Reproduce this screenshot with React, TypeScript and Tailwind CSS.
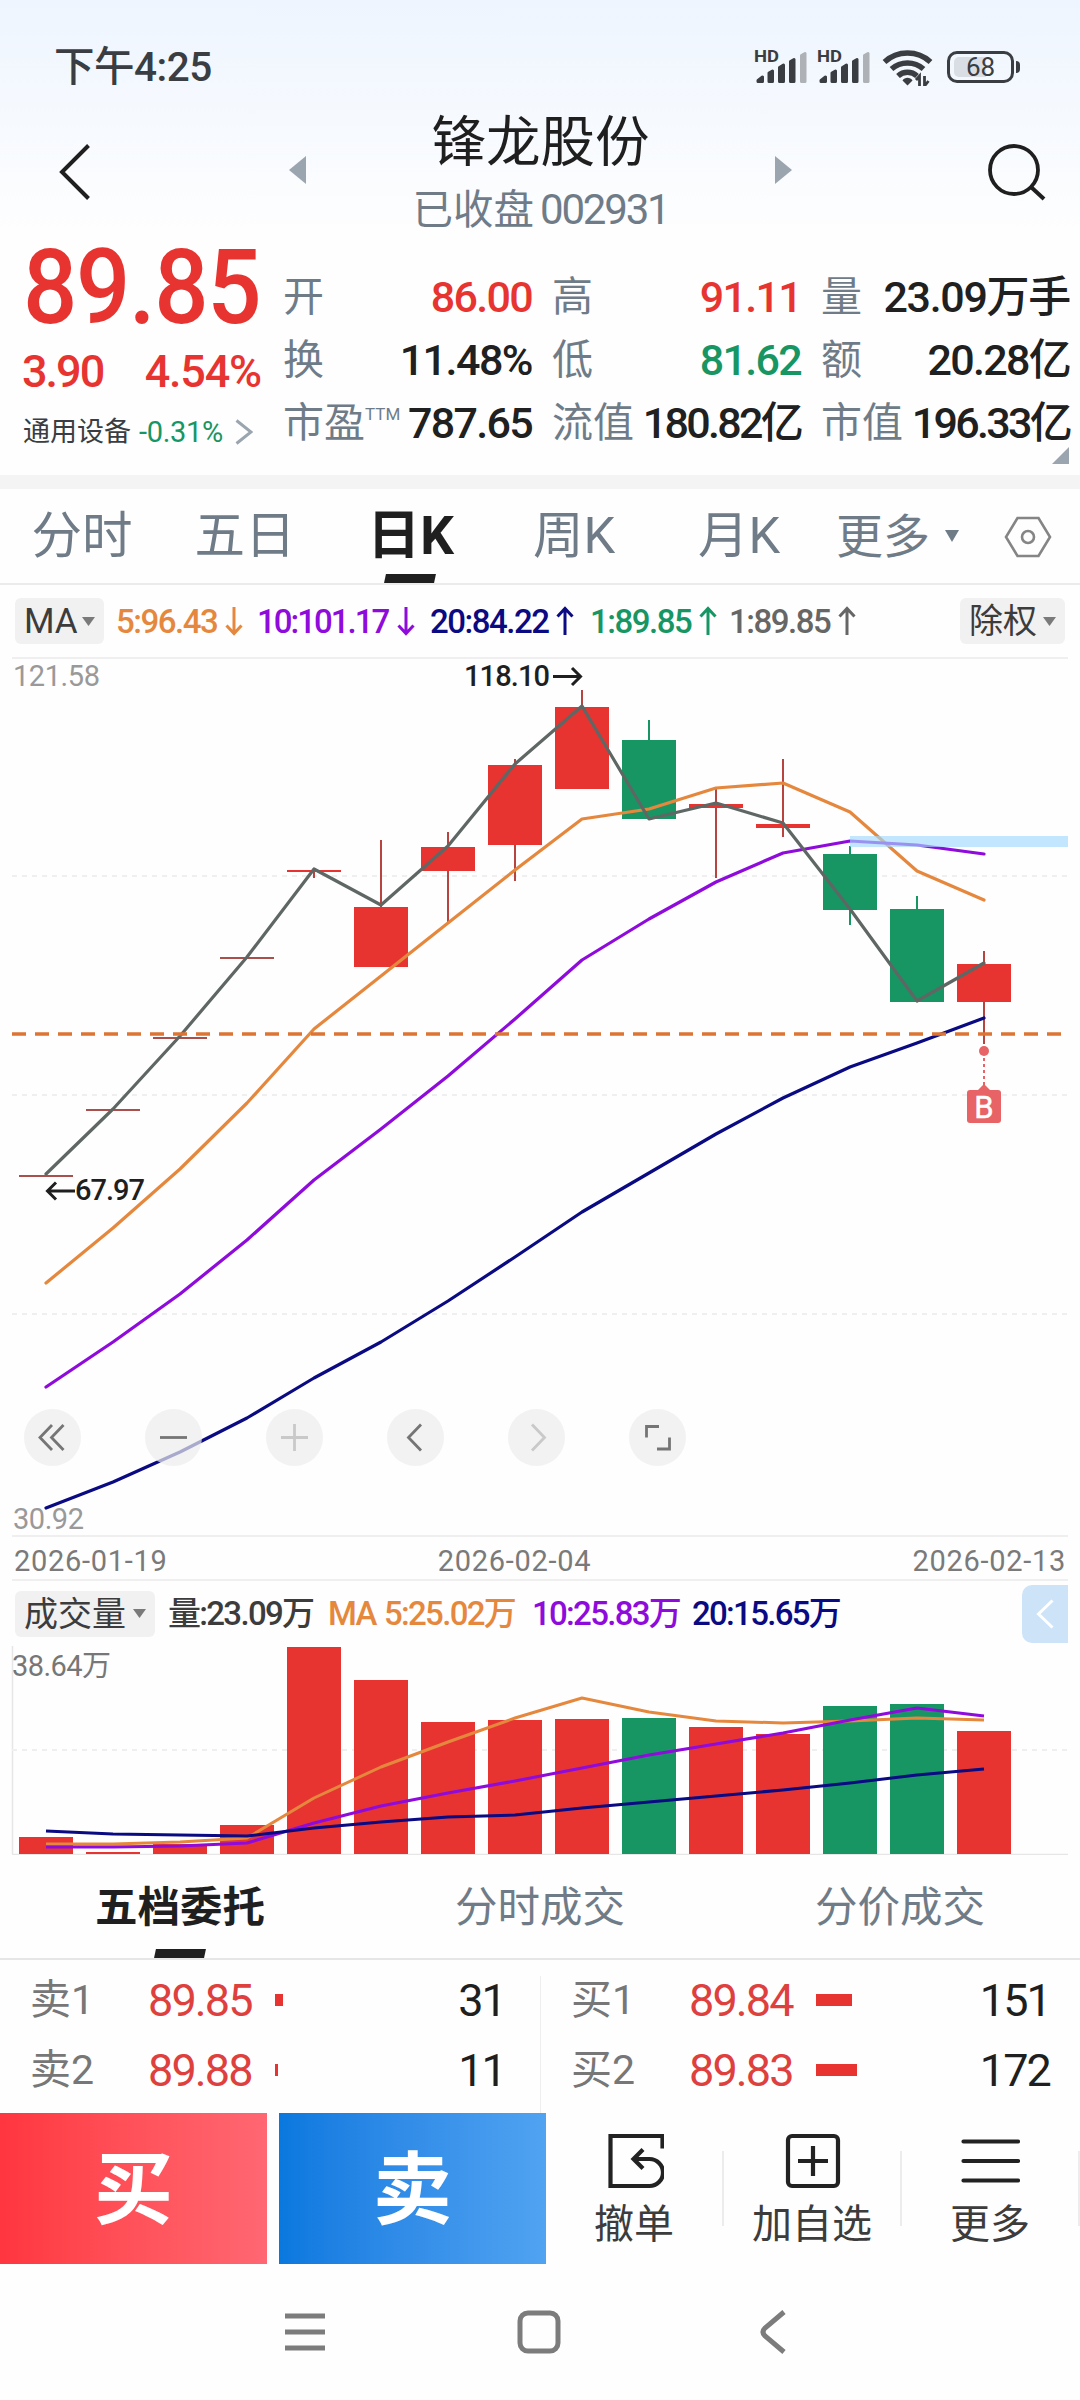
import type { ReactNode } from "react"
import clsx from "clsx"

const RED = "#e73431"
const GREEN = "#179664"
const ORANGE = "#e5883e"
const PURPLE = "#8e0bdc"
const NAVY = "#0a0a82"
const GREY_LINE = "#5f6764"

// x centre of the n-th candle / volume bar
const cx = (i: number) => 46 + i * 67

interface Candle {
  top: number
  bottom: number
  high?: number
  low?: number
  down?: boolean
}

const candles: Candle[] = [
  { top: 1175, bottom: 1177 },
  { top: 1109, bottom: 1111 },
  { top: 1037, bottom: 1039 },
  { top: 957, bottom: 959 },
  { top: 870, bottom: 872, high: 868, low: 878 },
  { top: 907, bottom: 967, high: 840 },
  { top: 847, bottom: 871, high: 832, low: 922 },
  { top: 765, bottom: 845, high: 759, low: 881 },
  { top: 707, bottom: 789, high: 690 },
  { top: 740, bottom: 819, high: 720, down: true },
  { top: 804, bottom: 808, high: 788, low: 878 },
  { top: 824, bottom: 828, high: 759, low: 837 },
  { top: 854, bottom: 910, high: 846, low: 925, down: true },
  { top: 909, bottom: 1002, high: 896, down: true },
  { top: 964, bottom: 1002, high: 951, low: 1044 },
]

const closeLine = [1174, 1109, 1036, 957, 869, 905, 846, 764, 706, 819, 803, 823, 909, 1001, 963]
const ma5 = [1283, 1228, 1169, 1103, 1029, 976, 923, 870, 819, 809, 788, 783, 812, 871, 900]
const ma10 = [1387, 1342, 1294, 1240, 1180, 1129, 1076, 1019, 960, 919, 882, 853, 841, 845, 854]
const ma20 = [1508, 1482, 1452, 1418, 1378, 1342, 1301, 1257, 1212, 1173, 1134, 1098, 1067, 1043, 1018]

const volumes = [1837, 1852, 1844, 1825, 1647, 1680, 1722, 1720, 1719, 1718, 1727, 1734, 1706, 1704, 1731]
const volumeDown = [9, 12, 13]
const vol5 = [1844, 1844, 1842, 1838, 1798, 1767, 1742, 1718, 1698, 1712, 1721, 1723, 1721, 1718, 1720]
const vol10 = [1847, 1847, 1846, 1843, 1823, 1806, 1793, 1781, 1768, 1755, 1744, 1733, 1720, 1708, 1716]
const vol20 = [1831, 1834, 1835, 1836, 1828, 1822, 1817, 1815, 1808, 1802, 1796, 1790, 1783, 1775, 1769]

const toPoints = (ys: number[]) => ys.map((y, i) => `${cx(i)},${y}`).join(" ")

function Caret({ className = "h-[9px] w-[13px]" }: { className?: string }) {
  return (
    <svg viewBox="0 0 12 10" preserveAspectRatio="none" className={clsx("shrink-0", className)}>
      <path d="M0 0H12L6 10Z" fill="currentColor" />
    </svg>
  )
}

function TrendArrow({ up }: { up?: boolean }) {
  return (
    <svg viewBox="0 0 18 30" className={clsx("h-[30px] w-[18px] shrink-0", !up && "rotate-180")}>
      <path d="M9 29V3M1.5 10.5L9 2.5L16.5 10.5" fill="none" stroke="currentColor" strokeWidth="3" />
    </svg>
  )
}

function Signal() {
  return (
    <svg viewBox="0 0 54 38" className="h-[38px] w-[54px]">
      <text x="0" y="14" fontSize="16.500" fontWeight="700" fill="#3a3d41" textLength="25" lengthAdjust="spacingAndGlyphs">
        HD
      </text>
      <g strokeWidth="3" strokeLinejoin="round" fill="#3a3d41" stroke="#3a3d41">
        <path d="M4 32.500L8.500 29V33.500H4ZM15 25L18.500 23V33.500H15ZM25.500 19.500L29.500 17V33.500H25.500ZM36.500 13.500L40 11.500V33.500H36.500Z" />
        <path d="M47.500 7.500L51 5.500V33.500H47.500Z" fill="#aeb1b5" stroke="#aeb1b5" />
      </g>
    </svg>
  )
}

function StatusBar() {
  return (
    <div className="flex h-[100px] items-center pt-[34px] pr-[60px] pl-[54px] text-[#3a3d41]">
      <span className="text-[40.500px] leading-none font-medium tracking-[-0.5px]">下午4:25</span>
      <div className="ml-auto flex items-center">
        <div className="mr-[9px]">
          <Signal />
        </div>
        <div className="mr-[11px]">
          <Signal />
        </div>
        <svg viewBox="0 0 51 38" className="mr-[14px] h-[38px] w-[51px]">
          <g fill="none" stroke="#3a3d41" strokeWidth="5.5">
            <path d="M2.500 14A34 34 0 0 1 48.500 14" />
            <path d="M9.500 21A24 24 0 0 1 41.500 21" />
            <path d="M16 28A14 14 0 0 1 35 28" />
          </g>
          <path d="M25.500 37.500L20.500 32.500A6 6 0 0 1 30.500 32.500Z" fill="#3a3d41" />
          <path d="M37.500 38V28L34 32M42.500 28V38L46.500 33" fill="none" stroke="#3a3d41" strokeWidth="2.800" />
        </svg>
        <div className="flex items-center gap-[2px]">
          <div className="relative flex h-8 w-[67px] items-center justify-center rounded-[10px] border-[3.500px] border-[#3a3d41]">
            <div className="absolute top-[3px] bottom-[3px] left-1 w-8 rounded-l-[5px] bg-[#d9dee5]" />
            <span className="relative text-[26px] leading-none">68</span>
          </div>
          <div className="h-3 w-1 rounded-r bg-[#3a3d41]" />
        </div>
      </div>
    </div>
  )
}

function TitleBar() {
  return (
    <div className="flex h-[136px] items-center justify-between pr-[33px] pl-[59px]">
      <svg viewBox="0 0 32 56" className="mt-[8px] h-14 w-8">
        <path d="M29.500 1.500L3 28L29.500 54.500" fill="none" stroke="#1f1f1f" strokeWidth="4" />
      </svg>
      <svg viewBox="0 0 17 28" className="mt-[3px] mr-[3px] ml-[96px] h-7 w-[17px] text-[#9aa5af]">
        <path d="M17 0V28L0 14Z" fill="currentColor" />
      </svg>
      <div className="mt-[10px] flex w-[260px] flex-col items-center">
        <h1 className="text-[54.500px] leading-none text-[#1f1f1f]">锋龙股份</h1>
        <p className="mt-[20px] flex items-center gap-[6px] leading-none text-[#6f7c88]">
          <span className="text-[40.500px] leading-none">已收盘</span>
          <span className="text-[42px] leading-none tracking-[-2.200px]">002931</span>
        </p>
      </div>
      <svg viewBox="0 0 17 28" className="mt-[3px] mr-[93px] ml-[3px] h-7 w-[17px] text-[#9aa5af]">
        <path d="M0 0V28L17 14Z" fill="currentColor" />
      </svg>
      <svg viewBox="0 0 60 60" className="mt-[8px] h-[60px] w-[60px]">
        <circle cx="27" cy="28" r="24" fill="none" stroke="#1f1f1f" strokeWidth="3.800" />
        <path d="M44 45L57 57" stroke="#1f1f1f" strokeWidth="4" />
      </svg>
    </div>
  )
}

interface StatProps {
  label: ReactNode
  value: string
  tone?: string
  fit?: string
}

function Stat({ label, value, tone = "text-[#202020]", fit = "tracking-[-1.700px]" }: StatProps) {
  return (
    <div className="flex h-[63px] items-center justify-between leading-none whitespace-nowrap">
      <span className="flex text-[41px] text-[#6f7c88]">{label}</span>
      <span className={clsx("-mr-px text-[43px] font-medium", tone, fit)}>{value}</span>
    </div>
  )
}

function Quote() {
  return (
    <section className="flex h-[239px] pl-[23px] text-[#e73431]">
      <div className="w-[260px] shrink-0">
        <div className="mt-[14px] flex h-[76px] origin-left scale-x-[0.920] items-center text-[104px] leading-none font-medium tracking-[-1.500px]">
          89.85
        </div>
        <div className="mt-[25px] flex h-[40px] w-[238px] items-center justify-between text-[45px] leading-none font-medium">
          <span className="-ml-px tracking-[-2px]">3.90</span>
          <span className="tracking-[-1.200px]">4.54%</span>
        </div>
        <div className="mt-[25px] flex h-8 items-center leading-none">
          <span className="text-[27px] text-[#3a3d41]">通用设备</span>
          <span className="ml-2 text-[29px] tracking-[-0.300px] text-[#179664]">-0.31%</span>
          <svg viewBox="0 0 18 26" className="ml-[12px] h-[26px] w-[18px]">
            <path d="M1.500 1.500L16 13L1.500 24.500" fill="none" stroke="#9aa5af" strokeWidth="3" />
          </svg>
        </div>
      </div>
      <div className="grid w-[786px] shrink-0 grid-cols-3 gap-x-[21px] pt-[30px]">
        <div>
          <Stat label="开" value="86.00" tone="text-[#e73431]" />
          <Stat label="换" value="11.48%" fit="tracking-[-1.500px]" />
          <Stat
            label={
              <>
                市盈<sup className="top-0 mt-[3px] text-[17px] leading-none">TTM</sup>
              </>
            }
            value="787.65"
          />
        </div>
        <div>
          <Stat label="高" value="91.11" tone="text-[#e73431]" />
          <Stat label="低" value="81.62" tone="text-[#179664]" />
          <Stat label="流值" value="180.82亿" fit="tracking-[-2.700px]" />
        </div>
        <div>
          <Stat label="量" value="23.09万手" fit="tracking-[-1.300px]" />
          <Stat label="额" value="20.28亿" />
          <Stat label="市值" value="196.33亿" fit="tracking-[-2.700px]" />
          <svg viewBox="0 0 17 17" className="-mt-[8px] ml-auto h-[17px] w-[17px]">
            <path d="M17 0V17H0Z" fill="#9aa5af" />
          </svg>
        </div>
      </div>
    </section>
  )
}

function PeriodTabs() {
  return (
    <nav className="flex h-24 items-stretch border-b-2 border-[#ebebeb] text-[50.500px] leading-none text-[#6f7c88]">
      <button className="w-[164px]">分时</button>
      <button className="w-[162px]">五日</button>
      <button className="relative w-[172px] pr-[3px] text-[53px] font-bold text-[#1f1f1f]">
        日K
        <span className="absolute bottom-0 left-[59px] h-[9px] w-[50px] -skew-x-12 bg-[#1f1f1f]" />
      </button>
      <button className="w-[152px]">周K</button>
      <button className="w-[178px]">月K</button>
      <button className="flex w-[131px] items-center justify-end gap-[15px] text-[47px]">
        更多
        <Caret className="h-3 w-[14px]" />
      </button>
      <svg viewBox="0 0 48 42" className="mt-[27px] ml-[45px] h-[42px] w-12">
        <path d="M13.500 2H34.500L46 21L34.500 40H13.500L2 21Z" fill="none" stroke="#858585" strokeWidth="2.600" />
        <circle cx="24" cy="21" r="6" fill="none" stroke="#858585" strokeWidth="2.600" />
      </svg>
    </nav>
  )
}

function Chip({ className, children }: { className: string; children: ReactNode }) {
  return (
    <button
      className={clsx(
        "flex h-[46px] shrink-0 items-center justify-between rounded-[6px] bg-[#f1f1f1] px-[9px] text-[34px] leading-none font-normal tracking-normal text-[#3c3c3c]",
        className
      )}
    >
      {children}
    </button>
  )
}

function MaLegend() {
  return (
    <div className="flex h-[72px] items-center px-[15px] text-[33px] leading-none font-medium tracking-[-1.500px]">
      <Chip className="mr-3 w-[89px]">
        <span className="text-[35px]">MA</span>
        <Caret className="h-[9px] w-[13px] text-[#7a7a7a]" />
      </Chip>
      <span className="flex w-[141px] items-center gap-2 text-[#e5883e]">
        5:96.43
        <TrendArrow />
      </span>
      <span className="flex w-[173px] items-center gap-[9px] tracking-[-2px] text-[#8e0bdc]">
        10:101.17
        <TrendArrow />
      </span>
      <span className="flex w-[160px] items-center gap-2 text-[#0a0a82]">
        20:84.22
        <TrendArrow up />
      </span>
      <span className="flex w-[139px] items-center gap-2 text-[#179664]">
        1:89.85
        <TrendArrow up />
      </span>
      <span className="flex items-center gap-2 text-[#666]">
        1:89.85
        <TrendArrow up />
      </span>
      <Chip className="ml-auto w-[105px]">
        <span>除权</span>
        <Caret className="h-[9px] w-[13px] text-[#7a7a7a]" />
      </Chip>
    </div>
  )
}

const controls = [
  { name: "first", d: "M28 16L16 28.500L28 41M39.500 16L27.500 28.500L39.500 41" },
  { name: "zoom out", d: "M15 28.500H42" },
  { name: "zoom in", d: "M15 28.500H42M28.500 15V42", dim: true },
  { name: "previous", d: "M34 15.500L21.500 28.500L34 41.500" },
  { name: "next", d: "M24 15.500L36.500 28.500L24 41.500", dim: true },
  { name: "full screen", d: "M17.500 28.500V17.500H30M40.500 28.500V40H28" },
]

function PriceChart() {
  return (
    <div className="relative h-[880px]">
      <svg viewBox="0 657 1080 880" className="h-[880px] w-[1080px]">
        <path d="M12 658H1068M12 1536H1068" stroke="#efefef" strokeWidth="2" />
        <path d="M12 876H1068M12 1095H1068M12 1314H1068" stroke="#efefef" strokeWidth="2" strokeDasharray="5 5" />
        {candles.map((c, i) => (
          <g key={i} fill={c.down ? GREEN : RED}>
            <rect
              x={cx(i) - 1}
              y={c.high ?? c.top}
              width="2"
              height={(c.low ?? c.bottom) - (c.high ?? c.top)}
              fill={c.down ? GREEN : "#b8443f"}
            />
            <rect x={cx(i) - 27} y={c.top} width="54" height={c.bottom - c.top} fill={i < 4 ? "#a9504c" : undefined} />
          </g>
        ))}
        <g fill="none" strokeWidth="3.200" strokeLinejoin="round" strokeLinecap="round">
          <polyline points={toPoints(ma5)} stroke={ORANGE} />
          <polyline points={toPoints(ma10)} stroke={PURPLE} />
          <polyline points={toPoints(ma20)} stroke={NAVY} />
          <polyline points={toPoints(closeLine)} stroke={GREY_LINE} />
        </g>
        <path d="M12 1034H1063" stroke="#dd7433" strokeWidth="3.400" strokeDasharray="14 9" />
        <rect x="850" y="836" width="218" height="11" fill="rgb(161 217 252 / 0.66)" />

        <circle cx="984" cy="1051" r="5" fill="#e76365" />
        <path d="M984 1058V1085" stroke="#e76365" strokeWidth="2" strokeDasharray="3 3" />
        <path d="M984 1084L991 1091H977Z" fill="#e76365" />
        <rect x="967" y="1090" width="34" height="33" rx="3" fill="#e76365" />
        <text x="984" y="1117.500" textAnchor="middle" fontSize="31" fill="#fff" stroke="#fff" strokeWidth="0.500">
          B
        </text>

        <g fontSize="29" fill="#999">
          <text x="13" y="686" textLength="87">121.58</text>
          <text x="13" y="1529" textLength="71">30.92</text>
        </g>
        <g fontSize="29" fontWeight="500" fill="#1f1f1f">
          <text x="464" y="685.500" textLength="86">118.10</text>
          <text x="75" y="1199.500" textLength="70">67.97</text>
        </g>
        <g fill="none" stroke="#1f1f1f" strokeWidth="3">
          <path d="M553 676.500H580M572 668L580.500 676.500L572 685" />
          <path d="M75 1191H48M56 1182.500L47.500 1191L56 1199.500" />
        </g>
      </svg>
      <div className="absolute top-[752px] left-6 flex gap-16">
        {controls.map((c) => (
          <button key={c.name} className="h-[57px] w-[57px] rounded-full bg-[#ececec]/70">
            <svg viewBox="0 0 57 57" className="h-[57px] w-[57px]">
              <path d={c.d} fill="none" stroke={c.dim ? "#c9c9c9" : "#757575"} strokeWidth="2.800" />
            </svg>
          </button>
        ))}
      </div>
    </div>
  )
}

function VolumeLegend() {
  return (
    <div className="flex h-[65px] items-center pr-3 pl-[15px] text-[33px] leading-none font-medium tracking-[-1.700px] whitespace-nowrap">
      <Chip className="mr-[13px] w-[140px]">
        <span>成交量</span>
        <Caret className="h-[9px] w-[13px] text-[#7a7a7a]" />
      </Chip>
      <span className="w-[160px] text-[#3c3c3c]">量:23.09万</span>
      <span className="w-[56px] text-[#e5883e]">MA</span>
      <span className="w-[148px] text-[#e5883e]">5:25.02万</span>
      <span className="w-[160px] text-[#8e0bdc]">10:25.83万</span>
      <span className="text-[#0a0a82]">20:15.65万</span>
      <button className="ml-auto flex h-[58px] w-[46px] items-center justify-center rounded-l-[10px] bg-[#cde3f8]">
        <svg viewBox="0 0 18 30" className="h-[30px] w-[18px]">
          <path d="M16.500 1.500L2.500 15L16.500 28.500" fill="none" stroke="#fff" strokeWidth="3" />
        </svg>
      </button>
    </div>
  )
}

function VolumeChart() {
  return (
    <svg viewBox="0 1646 1080 209" className="block h-[209px] w-[1080px]">
      <path d="M12.500 1646V1854M12 1854.500H1068" stroke="#e6e6e6" strokeWidth="1.500" />
      <path d="M12 1750H1068" stroke="#efefef" strokeWidth="2" strokeDasharray="5 5" />
      <text x="12" y="1676" fontSize="29" fill="#777" textLength="99">38.64万</text>
      {volumes.map((y, i) => (
        <rect key={i} x={cx(i) - 27} y={y} width="54" height={1854 - y} fill={volumeDown.includes(i) ? GREEN : RED} />
      ))}
      <g fill="none" strokeWidth="3" strokeLinejoin="round">
        <polyline points={toPoints(vol5)} stroke={ORANGE} />
        <polyline points={toPoints(vol10)} stroke={PURPLE} />
        <polyline points={toPoints(vol20)} stroke={NAVY} />
      </g>
    </svg>
  )
}

function OrderRow({ label, price, bar, amount }: { label: string; price: string; bar: string; amount: string }) {
  return (
    <div className="flex h-[70px] items-center leading-none">
      <span className="w-[118px] text-[41px] text-[#777]">{label}</span>
      <span className="w-[127px] text-[45px] tracking-[-1.900px] text-[#de403e]">{price}</span>
      <span className={clsx("h-3 bg-[#e73431]", bar)} />
      <span className="ml-auto text-[45px] tracking-[-1.900px] text-[#1f1f1f]">{amount}</span>
    </div>
  )
}

function OrderBook() {
  return (
    <section className="h-[258px]">
      <nav className="grid h-[105px] grid-cols-3 border-b-2 border-[#e6e6e6] text-[42.500px] leading-none text-[#6f7c88]">
        <button className="relative pt-[3px] font-bold text-[#1f1f1f]">
          五档委托
          <span className="absolute bottom-0 left-[155px] h-[9px] w-[50px] -skew-x-12 bg-[#1f1f1f]" />
        </button>
        <button className="pt-[3px]">分时成交</button>
        <button className="pt-[3px]">分价成交</button>
      </nav>
      <div className="flex h-[153px]">
        <div className="w-[540px] pt-[5px] pr-[35px] pl-[30px]">
          <OrderRow label="卖1" price="89.85" bar="w-2" amount="31" />
          <OrderRow label="卖2" price="89.88" bar="w-[3px]" amount="11" />
        </div>
        <div className="mt-4 w-px bg-[#eeeeee]" />
        <div className="w-[539px] pt-[5px] pr-[30px] pl-[30px]">
          <OrderRow label="买1" price="89.84" bar="w-9" amount="151" />
          <OrderRow label="买2" price="89.83" bar="w-[41px]" amount="172" />
        </div>
      </div>
    </section>
  )
}

function Action({ label, children }: { label: string; children: ReactNode }) {
  return (
    <button className="flex flex-1 flex-col items-center pt-[18px] text-[40px] leading-none text-[#3c3c3c]">
      <svg viewBox="0 0 60 60" className="mb-[14px] h-[60px] w-[60px]" fill="none" stroke="#222" strokeWidth="4.200">
        {children}
      </svg>
      {label}
    </button>
  )
}

function TradeBar() {
  return (
    <div className="flex h-[151px]">
      <button className="w-[267px] bg-linear-to-r from-[#ff353f] to-[#ff6772] pt-[5px] text-[79px] leading-none font-bold text-white">
        买
      </button>
      <button className="ml-3 w-[267px] bg-linear-to-r from-[#0878df] to-[#50a3f1] pt-[5px] text-[79px] leading-none font-bold text-white">
        卖
      </button>
      <div className="flex flex-1">
        <Action label="撤单">
          <path d="M58.500 17.500V5H6.500V55H45.500A13.500 13.500 0 0 0 45.500 28H29M39 18.500L29.500 28L39 37.500" />
        </Action>
        <div className="mt-[38px] h-[75px] w-[2px] bg-[#ececec]" />
        <Action label="加自选">
          <rect x="6" y="5" width="50" height="50" rx="4" />
          <path d="M31 15V45M16 30H46" />
        </Action>
        <div className="mt-[38px] h-[75px] w-[2px] bg-[#ececec]" />
        <Action label="更多">
          <path d="M3.500 10.500H58M3.500 30H58M3.500 49.500H58" strokeLinecap="round" />
        </Action>
        <div className="mt-[38px] h-[75px] w-[2px] bg-[#ececec]" />
      </div>
    </div>
  )
}

function SystemNav() {
  return (
    <div className="flex h-[136px] items-center pl-[284px]">
      <svg viewBox="0 0 42 44" className="h-11 w-[42px]" fill="none" stroke="#7c7c7c" strokeWidth="5">
        <path d="M1 6H41M1 22H41M1 38H41" />
      </svg>
      <svg viewBox="0 0 44 44" className="ml-[191px] h-11 w-11" fill="none" stroke="#7c7c7c" strokeWidth="5">
        <rect x="3" y="3" width="38" height="38" rx="8" />
      </svg>
      <svg viewBox="0 0 30 44" className="ml-[197px] h-11 w-[30px]" fill="none" stroke="#7c7c7c" strokeWidth="5">
        <path d="M26 2L7 18Q3 22 7 26L26 42" />
      </svg>
    </div>
  )
}

export default function App() {
  return (
    <div className="h-[2400px] w-[1080px] overflow-hidden bg-[#fefefe] font-['Roboto','Noto_Sans_CJK_SC',sans-serif]">
      <header className="bg-linear-to-b from-[#eef5ff] to-[#fefefe] to-[236px]">
        <StatusBar />
        <TitleBar />
        <Quote />
      </header>
      <div className="h-[14px] bg-[#f4f4f4]" />
      <PeriodTabs />
      <MaLegend />
      <PriceChart />
      <div className="mx-3 flex h-11 items-center justify-between border-b-2 border-[#efefef] px-[2px] pt-[7px] text-[29px] leading-none tracking-[0.700px] text-[#7a7a7a]">
        <span>2026-01-19</span>
        <span className="mr-[48px] -ml-[3px]">2026-02-04</span>
        <span>2026-02-13</span>
      </div>
      <VolumeLegend />
      <VolumeChart />
      <OrderBook />
      <TradeBar />
      <SystemNav />
    </div>
  )
}
